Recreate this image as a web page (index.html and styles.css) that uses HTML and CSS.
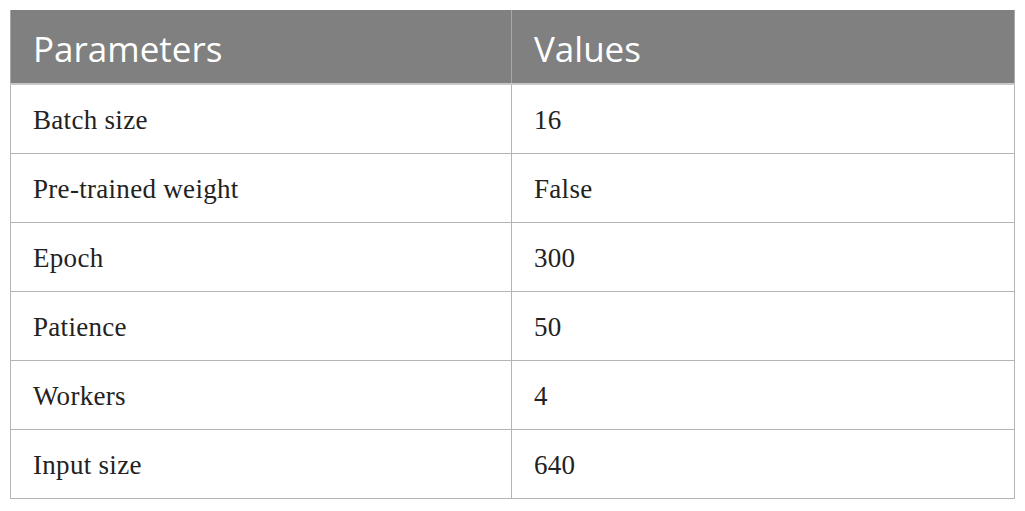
FILE: index.html
```html
<!DOCTYPE html>
<html>
<head>
<meta charset="utf-8">
<link rel="stylesheet" href="styles.css">
</head>
<body>
<table class="params">
  <thead>
    <tr><th class="col-a">Parameters</th><th>Values</th></tr>
  </thead>
  <tbody>
    <tr><td>Batch size</td><td>16</td></tr>
    <tr><td>Pre-trained weight</td><td>False</td></tr>
    <tr><td>Epoch</td><td>300</td></tr>
    <tr><td>Patience</td><td>50</td></tr>
    <tr><td>Workers</td><td>4</td></tr>
    <tr><td>Input size</td><td>640</td></tr>
  </tbody>
</table>
</body>
</html>
```
FILE: styles.css
```css
html, body {
  margin: 0;
  padding: 0;
  background: #ffffff;
}
body {
  padding: 10px 10px 0 10px;
}
.params {
  border-collapse: collapse;
  width: 1005px;
  table-layout: fixed;
}
.params th {
  background: #808080;
  color: #ffffff;
  font-family: "Open Sans", sans-serif;
  font-weight: 400;
  font-size: 35px;
  text-align: left;
  height: 74px;
  padding: 3px 0 0 22px;
  border-left: 1px solid #a8a8a8;
  border-right: 1px solid #a8a8a8;
  border-bottom: 2px solid #c8c8c8;
  box-sizing: border-box;
}
.params .col-a {
  width: 501px;
}
.params td {
  font-family: "Liberation Serif", serif;
  font-size: 27px;
  letter-spacing: 0.3px;
  color: #222222;
  height: 69px;
  padding: 3px 0 0 22px;
  border: 1px solid #b4b4b4;
  box-sizing: border-box;
}
```
